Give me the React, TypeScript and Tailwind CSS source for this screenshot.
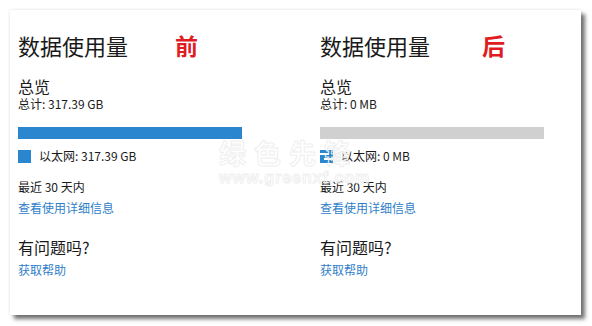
import React from "react";

const font = { fontFamily: '"Noto Sans CJK SC", "Noto Sans", sans-serif' };

function Column({
  mark,
  markOffset,
  total,
  eth,
  barClass,
  icon,
}: {
  mark: string;
  markOffset: string;
  total: string;
  eth: string;
  barClass: string;
  icon: React.ReactNode;
}) {
  return (
    <div className="flex flex-col w-[302px] shrink-0">
      <div className="flex items-start h-[24px] mt-[22px]">
        <div className="text-[22px] leading-[24px] text-[#1a1a1a] w-[130px] shrink-0">数据使用量</div>
        <div className={`text-[23px] leading-[24px] font-bold text-[#e01b22] ${markOffset}`}>{mark}</div>
      </div>
      <div className="mt-[21px] text-[16px] leading-[16px] text-[#1a1a1a]">总览</div>
      <div className="mt-[3px] text-[12px] leading-[14px] text-[#1a1a1a]">{total}</div>
      <div className={`mt-[16px] h-[12px] w-[224px] ${barClass}`} />
      <div className="mt-[10px] flex items-center h-[14px]">
        {icon}
        <span className="ml-[8px] text-[12px] leading-[14px] text-[#1a1a1a]">{eth}</span>
      </div>
      <div className="mt-[17px] text-[12px] leading-[14px] text-[#1a1a1a]">最近 30 天内</div>
      <div className="mt-[7px] text-[12px] leading-[14px] text-[#2f80c9]">查看使用详细信息</div>
      <div className="mt-[23px] text-[16px] leading-[18px] text-[#1a1a1a]">有问题吗?</div>
      <div className="mt-[7px] text-[12px] leading-[14px] text-[#2f80c9]">获取帮助</div>
    </div>
  );
}

export default function App() {
  return (
    <div className="w-[592px] h-[326px] bg-white relative overflow-hidden" style={font}>
      <div className="absolute left-[10px] top-[10px] w-[571px] h-[305px] bg-white shadow-[0_0_3px_rgba(0,0,0,0.12),4px_4px_4px_rgba(0,0,0,0.55)]">
        <div className="flex pl-[8px] pt-[1px]">
          <Column
            mark="前"
            markOffset="ml-[27px]"
            total="总计: 317.39 GB"
            eth="以太网: 317.39 GB"
            barClass="bg-[#2a86cf]"
            icon={<div className="w-[13px] h-[13px] bg-[#2a86cf]" />}
          />
          <Column
            mark="后"
            markOffset="ml-[32px]"
            total="总计: 0 MB"
            eth="以太网: 0 MB"
            barClass="bg-[#d0d0d0]"
            icon={
              <svg width="13" height="13" viewBox="0 0 13 13">
                <rect width="13" height="13" fill="#2a86cf" />
                <rect x="0" y="3" width="9" height="2" fill="#fff" />
                <rect x="4" y="8" width="9" height="2" fill="#fff" />
              </svg>
            }
          />
        </div>
      </div>
      <div className="absolute left-[219px] top-[138px] flex flex-col items-start pointer-events-none">
        <div className="text-[27px] leading-[30px] font-bold tracking-[8px] text-transparent [-webkit-text-stroke:1px_#efefef]">
          绿色先锋
        </div>
        <div
          className="mt-[2px] text-[16px] leading-[16px] font-bold tracking-[1px] text-transparent [-webkit-text-stroke:1px_#efefef]"
          style={{ fontFamily: '"Liberation Sans", sans-serif' }}
        >
          www.greenxf.com
        </div>
      </div>
    </div>
  );
}
